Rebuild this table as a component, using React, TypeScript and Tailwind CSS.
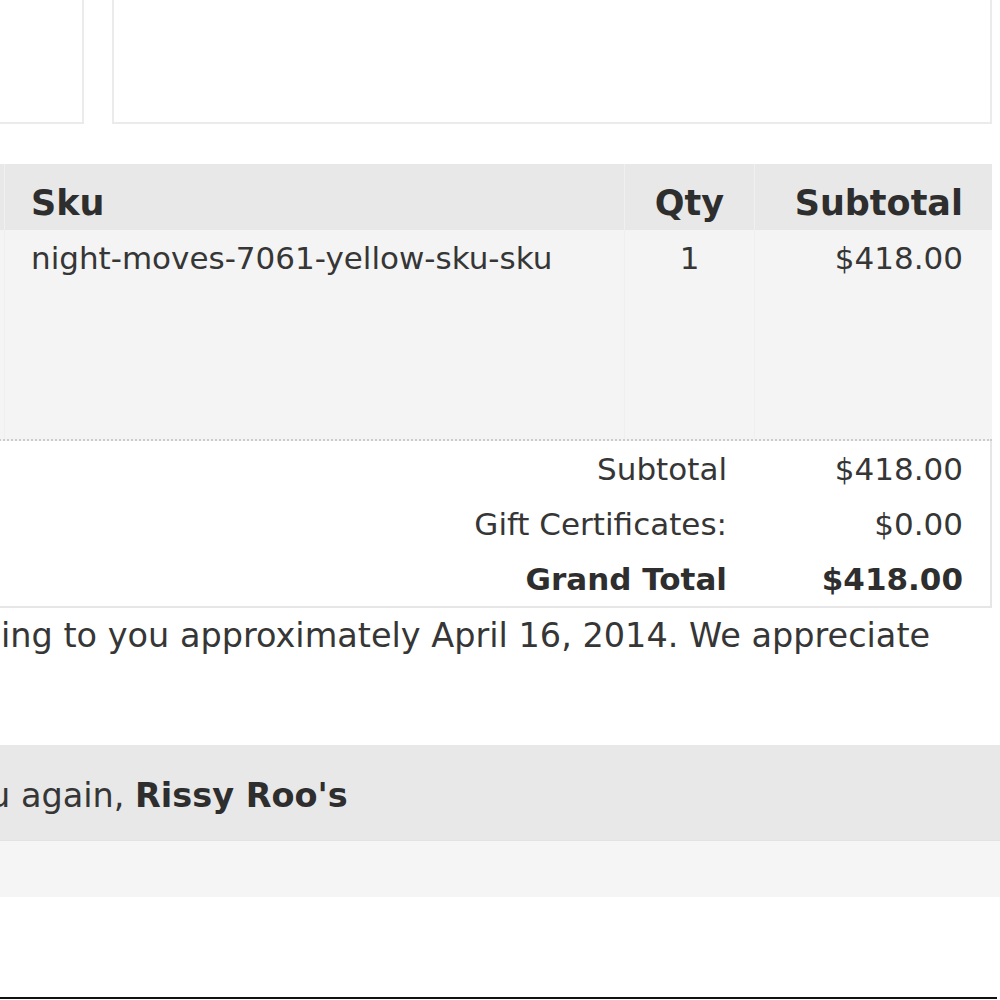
export default function App() {
  return (
    <div className="w-[1000px] h-[1000px] overflow-hidden bg-white text-[#363636] font-[family-name:DejaVu_Sans,Verdana,sans-serif] flex flex-col">
      {/* address boxes */}
      <div className="flex gap-[28px] -mt-[20px] -ml-[16px] shrink-0">
        <div className="w-[100px] h-[144px] border-2 border-[#ebebeb] shrink-0" />
        <div className="w-[880px] h-[144px] border-2 border-[#ebebeb] shrink-0" />
      </div>

      {/* order items */}
      <div className="mt-[40px] -ml-[120px] w-[1112px] shrink-0">
        <div className="grid grid-cols-[125px_620px_130px_237px] h-[66px] bg-[#e8e8e8] text-[35px] font-bold leading-[42px] text-[#2e2e2e]">
          <div className="border-r border-[#f0f0f0]" />
          <div className="pl-[26px] pt-[18px] border-r border-[#f0f0f0]">Sku</div>
          <div className="text-center pt-[18px] border-r border-[#f0f0f0]">Qty</div>
          <div className="text-right pr-[29px] pt-[18px]">Subtotal</div>
        </div>
        <div className="grid grid-cols-[125px_620px_130px_237px] h-[211px] bg-[#f4f4f4] border-b-2 border-dotted border-[#cccccc] text-[31px] leading-[46px]">
          <div className="border-r border-[#efefef]" />
          <div className="pl-[26px] pt-[5px] border-r border-[#efefef]">night-moves-7061-yellow-sku-sku</div>
          <div className="text-center pt-[5px] border-r border-[#efefef]">1</div>
          <div className="text-right pr-[29px] pt-[5px]">$418.00</div>
        </div>
        <div className="bg-white border-r-2 border-b-2 border-[#e6e6e6] text-[31px] leading-[42px]">
          {[
            ["Subtotal", "$418.00", false],
            ["Gift Certificates:", "$0.00", false],
            ["Grand Total", "$418.00", true],
          ].map(([label, value, bold]) => (
            <div
              key={label as string}
              className={`grid grid-cols-[875px_235px] h-[55px] items-center ${bold ? "font-bold text-[#2e2e2e]" : ""}`}
            >
              <div className="text-right pr-[28px]">{label}</div>
              <div className="text-right pr-[27px]">{value}</div>
            </div>
          ))}
        </div>
      </div>

      {/* note */}
      <p className="mt-[6px] pl-[1px] text-[33.5px] leading-[44px] whitespace-nowrap shrink-0">
        ing to you approximately April 16, 2014. We appreciate
      </p>

      {/* footer */}
      <div className="mt-[87px] h-[95px] bg-[#e8e8e8] pt-[29px] text-[33.5px] leading-[44px] whitespace-nowrap shrink-0">
        <span className="-ml-[11px]">u again, </span>
        <b className="text-[#2e2e2e]">Rissy Roo's</b>
      </div>
      <div className="h-[57px] bg-[#f5f5f5] border-t border-[#e2e2e2] shrink-0" />

      <div className="mt-[100px] h-[2px] w-[997px] bg-[#111111] shrink-0" />
    </div>
  );
}
